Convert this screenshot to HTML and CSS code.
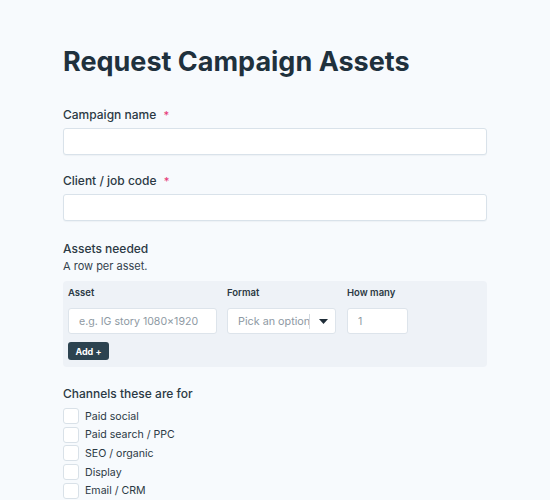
FILE: index.html
```html
<!DOCTYPE html>
<html lang="en">
<head>
<meta charset="utf-8">
<title>Request Campaign Assets</title>
<link rel="stylesheet" href="styles.css">
</head>
<body>
<main class="form">
  <h1 class="title">Request Campaign Assets</h1>

  <div class="field">
    <label class="label">Campaign name <span class="req">*</span></label>
    <input class="text-input" type="text">
  </div>

  <div class="field">
    <label class="label">Client / job code <span class="req">*</span></label>
    <input class="text-input" type="text">
  </div>

  <div class="field field-assets">
    <div class="group-title">Assets needed</div>
    <div class="hint">A row per asset.</div>
    <div class="repeater">
      <div class="rep-row">
        <div class="col col-asset">
          <div class="col-head">Asset</div>
          <input class="cell-input" type="text" placeholder="e.g. IG story 1080×1920">
        </div>
        <div class="col col-format">
          <div class="col-head">Format</div>
          <div class="select">
            <span class="select-text">Pick an option</span>
            <span class="select-sep"></span>
            <svg class="select-arrow" width="9" height="5" viewBox="0 0 9 5"><path d="M0 0h9L4.5 5z" fill="#1f2d38"/></svg>
          </div>
        </div>
        <div class="col col-count">
          <div class="col-head">How many</div>
          <input class="cell-input" type="text" placeholder="1">
        </div>
      </div>
      <button class="add-btn" type="button">Add +</button>
    </div>
  </div>

  <div class="field field-channels">
    <div class="group-title">Channels these are for</div>
    <ul class="checks">
      <li class="check"><span class="box"></span>Paid social</li>
      <li class="check"><span class="box"></span>Paid search / PPC</li>
      <li class="check"><span class="box"></span>SEO / organic</li>
      <li class="check"><span class="box"></span>Display</li>
      <li class="check"><span class="box"></span>Email / CRM</li>
    </ul>
  </div>
</main>
</body>
</html>
```

FILE: styles.css
```css
* { box-sizing: border-box; }

html, body {
  margin: 0;
  background: #f7fafd;
}

body {
  font-family: Inter, "Noto Sans", sans-serif;
  color: #2b3944;
}

.form {
  width: 424px;
  margin-left: 63px;
  padding-top: 45px;
}

.title {
  margin: 0 0 28px;
  font-size: 27px;
  line-height: 34px;
  font-weight: 700;
  color: #1f313d;
}

.field { margin-bottom: 18px; }

.label {
  display: block;
  font-size: 12px;
  line-height: 16px;
  font-weight: 500;
  color: #2b3944;
  margin-bottom: 5px;
}

.req {
  color: #e63a78;
  margin-left: 4px;
  font-size: 11px;
}

.text-input {
  display: block;
  width: 100%;
  height: 27px;
  margin: 0;
  border: 1px solid #d9e2ea;
  border-radius: 3px;
  background: #fff;
  box-shadow: 0 1px 1px rgba(30, 50, 70, 0.04);
}

.field-assets { margin-top: 20px; margin-bottom: 0; }

.group-title {
  font-size: 12px;
  line-height: 16px;
  font-weight: 500;
  color: #2b3944;
}

.hint {
  font-size: 11px;
  line-height: 14px;
  color: #34424d;
  margin-top: 2px;
}

.repeater {
  margin-top: 8px;
  background: #eef2f7;
  border-radius: 4px;
  padding: 6px 5px 7px;
}

.rep-row {
  display: flex;
  gap: 10px;
}

.col-count { margin-left: 1px; }

.col-head {
  font-size: 9.5px;
  line-height: 12px;
  font-weight: 600;
  color: #2b3944;
  margin-bottom: 9px;
}

.cell-input {
  display: block;
  height: 26px;
  margin: 0;
  padding: 0 10px;
  border: 1px solid #dde4eb;
  border-radius: 3px;
  background: #fff;
  font-family: inherit;
  font-size: 10.6px;
  color: #2b3944;
}

.cell-input::placeholder { color: #8e99a3; }

.col-asset .cell-input { width: 149px; }
.col-count .cell-input { width: 61px; }

.select {
  display: flex;
  align-items: center;
  width: 109px;
  height: 26px;
  padding-left: 10px;
  border: 1px solid #dde4eb;
  border-radius: 3px;
  background: #fff;
  overflow: hidden;
}

.select-text {
  font-size: 10.8px;
  color: #8e99a3;
  white-space: nowrap;
  width: 71px;
  overflow: hidden;
  flex: none;
}

.select-sep {
  width: 1px;
  height: 15px;
  background: #d3dae1;
  flex: none;
}

.select-arrow {
  margin-left: 9px;
  flex: none;
}

.add-btn {
  display: block;
  margin-top: 8px;
  height: 18px;
  width: 41px;
  padding: 0;
  border: none;
  border-radius: 3px;
  background: #2c4350;
  color: #fff;
  font-family: inherit;
  font-size: 9px;
  font-weight: 700;
}

.field-channels { margin-top: 19px; }

.checks {
  list-style: none;
  margin: 5px 0 0;
  padding: 0;
}

.check {
  display: flex;
  align-items: center;
  height: 18.6px;
  font-size: 10.6px;
  color: #2b3944;
}

.box {
  width: 16px;
  height: 16px;
  border: 1px solid #d9e1e8;
  border-radius: 3px;
  background: #fff;
  margin-right: 6px;
  flex: none;
}
```
